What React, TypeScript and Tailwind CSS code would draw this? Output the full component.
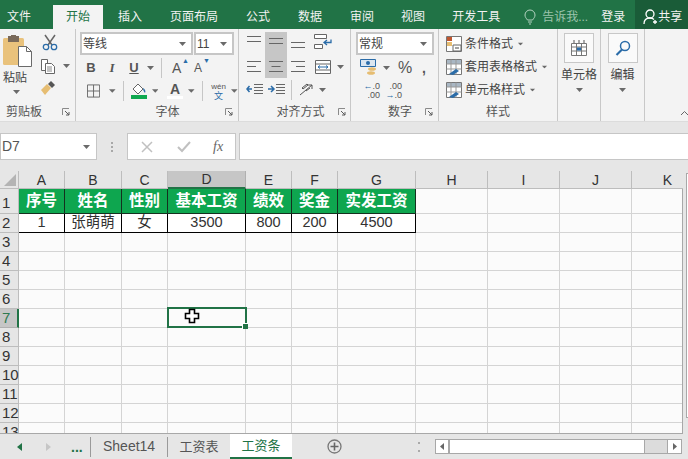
import React from 'react'

const CJK = "[font-family:'Liberation_Sans','Noto_Sans_CJK_SC',sans-serif]"

const tabs = [
  { label: '文件', cls: 'pl-[7px] pr-[22px]' },
  { label: '开始', cls: 'px-[13px]', active: true },
  { label: '插入', cls: 'px-[15px]' },
  { label: '页面布局', cls: 'px-[13px]' },
  { label: '公式', cls: 'px-[15px]' },
  { label: '数据', cls: 'px-[13px]' },
  { label: '审阅', cls: 'px-[15px]' },
  { label: '视图', cls: 'px-[12px]' },
  { label: '开发工具', cls: 'px-[15px]' },
]

const columns = ['A', 'B', 'C', 'D', 'E', 'F', 'G', 'H', 'I', 'J', 'K']
const headerRow = ['序号', '姓名', '性别', '基本工资', '绩效', '奖金', '实发工资']
const dataRow = ['1', '张萌萌', '女', '3500', '800', '200', '4500']

function Caret({ className = '' }: { className?: string }) {
  return (
    <svg width="7" height="4" viewBox="0 0 7 4" className={className}>
      <path d="M0 0h7L3.5 4z" fill="#6a6a6a" />
    </svg>
  )
}

function Launcher() {
  return (
    <svg width="8" height="8" viewBox="0 0 8 8">
      <path d="M.5 7V.5H7" fill="none" stroke="#8a8a8a" />
      <path d="M3 3l4 4M7 4v3H4" fill="none" stroke="#5a5a5a" />
    </svg>
  )
}

function GroupLabel({ text, launcher = true, pad }: { text: string; launcher?: boolean; pad: string }) {
  return (
    <div className={`mt-auto h-[17px] mb-[1px] flex items-center text-[12px] text-[#555] ${pad}`}>
      <span className="flex-1 text-center">{text}</span>
      {launcher && <Launcher />}
    </div>
  )
}

function Lines({ widths, align = 'left', color = '#666' }: { widths: number[]; align?: 'left' | 'center' | 'right'; color?: string }) {
  return (
    <svg width="16" height="13" viewBox="0 0 16 13">
      {widths.map((w, i) => {
        const x = align === 'left' ? 1 : align === 'right' ? 15 - w : 8 - w / 2
        return <path key={i} d={`M${x} ${1.5 + i * 5}h${w}`} stroke={color} />
      })}
    </svg>
  )
}

function Sep({ h = 'h-[20px]' }: { h?: string }) {
  return <div className={`w-px bg-[#c6c6c6] ${h}`} />
}

function Combo({ text, className }: { text: string; className: string }) {
  return (
    <div className={`h-[23px] border-2 border-[#c6c6c6] bg-white flex items-center pl-[1px] pr-[5px] text-[12px] text-[#444] ${className}`}>
      <span className="flex-1">{text}</span>
      <Caret />
    </div>
  )
}

function ClipboardGroup() {
  return (
    <div className="w-[76px] shrink-0 flex flex-col border-r border-[#c8c8c8]">
      <div className="flex">
        <div className="w-[36px] pl-[3px] pt-[6px] flex flex-col">
          <svg width="29" height="32" viewBox="0 0 29 32">
            <rect x="0" y="3" width="21" height="27" rx="1.5" fill="#e9c27c" />
            <rect x="5" y="1" width="11" height="6" fill="#7a6a5a" />
            <rect x="8" y="0" width="5" height="3" fill="#7a6a5a" />
            <path d="M15.500 11.500h8l5 5v15h-13z" fill="#fff" stroke="#6a6a6a" />
            <path d="M23.500 11.500v5h5" fill="none" stroke="#6a6a6a" />
          </svg>
          <span className="text-[12px] leading-[16px] mt-[3px] text-[#444]">粘贴</span>
          <Caret className="ml-[10px] mt-[4px]" />
        </div>
        <div className="flex flex-col pl-[3px] pt-[5px]">
          <svg width="16" height="17" viewBox="0 0 16 17" className="ml-[3px]">
            <path d="M3 1l7 10M13 1L6 11" stroke="#666" strokeWidth="1.500" fill="none" />
            <circle cx="4" cy="13" r="2.700" fill="none" stroke="#2b6ca8" strokeWidth="1.300" />
            <circle cx="12" cy="13" r="2.700" fill="none" stroke="#2b6ca8" strokeWidth="1.300" />
          </svg>
          <div className="flex items-center mt-[7px]">
            <svg width="16" height="16" viewBox="0 0 16 16" className="ml-[1px]">
              <path d="M1.500 1.500h6v11h-6z" fill="#fff" stroke="#666" />
              <path d="M5.500 5.500h6l3 3v7h-9z" fill="#fff" stroke="#666" />
              <path d="M7 9h5M7 11h5M7 13h5" stroke="#888" />
            </svg>
            <Caret className="ml-[7px]" />
          </div>
          <svg width="16" height="15" viewBox="0 0 16 15" className="ml-[1px] mt-[7px]">
            <path d="M1 9l6-6 4 4-6 7z" fill="#e6bd72" />
            <path d="M8 3l3-3 4 4-3 3z" fill="#555" />
          </svg>
        </div>
      </div>
      <GroupLabel text="剪贴板" pad="pl-[6px] pr-[5px] [&>span]:text-left" />
    </div>
  )
}

function FontGroup() {
  return (
    <div className="w-[163px] shrink-0 flex flex-col border-r border-[#c8c8c8] pl-[4px] pt-[3px]">
      <div className="flex gap-[1px]">
        <Combo text="等线" className="w-[113px]" />
        <Combo text="11" className="w-[40px]" />
      </div>
      <div className="flex items-center h-[22px] mt-[2px] text-[#555]">
        <span className="w-[20px] ml-[1px] text-center text-[13px] font-bold">B</span>
        <span className="w-[22px] text-center text-[13px] font-bold italic [font-family:'Liberation_Serif',serif]">I</span>
        <span className="w-[22px] text-center text-[13px] font-bold underline">U</span>
        <Caret className="ml-[2px] mr-[7px]" />
        <Sep />
        <span className="ml-[10px] w-[22px] text-[14px] font-medium relative">A<span className="absolute left-[10px] top-[-2px] text-[7px] text-[#2b6ca8]">▲</span></span>
        <span className="w-[22px] text-[12px] font-medium relative">A<span className="absolute left-[9px] top-[-3px] text-[7px] text-[#2b6ca8]">▼</span></span>
      </div>
      <div className="flex items-center h-[22px] mt-[1px]">
        <svg width="14" height="14" viewBox="0 0 14 14" className="ml-[7px]">
          <path d="M.5.500h13v13H.5zM7 .5v13M.5 7h13" fill="none" stroke="#666" />
        </svg>
        <Caret className="ml-[9px] mr-[7px]" />
        <Sep />
        <div className="ml-[7px] w-[16px] flex flex-col items-center">
          <svg width="16" height="12" viewBox="0 0 16 12">
            <path d="M2 6l5-5 5 5-5 5z" fill="#fff" stroke="#666" />
            <path d="M12 5c2 1 3 3 2 5-1-1-2-3-2-5z" fill="#2b6ca8" />
          </svg>
          <div className="h-[4px] w-[16px] bg-[#0fa84f]" />
        </div>
        <Caret className="ml-[5px] mr-[9px]" />
        <div className="w-[16px] flex flex-col items-center text-[14px] leading-[13px] font-bold text-[#555]">
          A
          <div className="h-[3px] w-[16px] bg-white" />
        </div>
        <Caret className="ml-[5px] mr-[7px]" />
        <Sep />
        <div className="ml-[8px] w-[17px] flex flex-col items-center text-[#555]">
          <span className="text-[8px] leading-[9px]">wén</span>
          <span className="text-[9px] leading-[10px] text-[#2b6ca8]">文</span>
        </div>
        <Caret className="ml-[5px]" />
      </div>
      <GroupLabel text="字体" pad="pl-[30px] pr-[5px]" />
    </div>
  )
}

function AlignGroup() {
  return (
    <div className="w-[112px] shrink-0 flex flex-col border-r border-[#c8c8c8] pt-[3px]">
      <div className="flex pl-[4px]">
        <div className="w-[22px] h-[23px] flex items-start justify-center pt-[3px]"><Lines widths={[14, 14]} align="center" /></div>
        <div className="w-[22px] h-[23px] bg-[#c6c6c6] flex items-center justify-center"><Lines widths={[14, 14]} align="center" /></div>
        <div className="w-[22px] h-[23px] flex items-end justify-center pb-[1px]"><Lines widths={[14, 14]} align="center" /></div>
        <div className="ml-[3px] w-[22px] flex justify-center pt-[2px]">
          <svg width="18" height="16" viewBox="0 0 18 16">
            <path d="M.5.500h12v4H.5zM.5 10.500h8v4H.5z" fill="#fff" stroke="#666" />
            <path d="M17 5.500v3h-6M13 6l-3 2.500 3 2.500" fill="none" stroke="#2b6ca8" strokeWidth="1.300" />
          </svg>
        </div>
      </div>
      <div className="flex items-center pl-[4px]">
        <div className="w-[22px] h-[23px] flex items-center justify-center"><Lines widths={[14, 9, 14]} /></div>
        <div className="w-[22px] h-[23px] bg-[#c6c6c6] flex items-center justify-center"><Lines widths={[14, 9, 14]} align="center" /></div>
        <div className="w-[22px] h-[23px] flex items-center justify-center"><Lines widths={[14, 9, 14]} align="right" /></div>
        <div className="ml-[3px] w-[22px] flex justify-center">
          <svg width="16" height="14" viewBox="0 0 16 14">
            <path d="M.5.500h15v13H.5zM.5 4h15M.5 10h15" fill="#fff" stroke="#666" />
            <path d="M3 7h10M3 7l2-1.500M3 7l2 1.500M13 7l-2-1.500M13 7l-2 1.500" stroke="#2b6ca8" fill="none" />
          </svg>
        </div>
        <Caret className="ml-[3px]" />
      </div>
      <div className="flex items-center pl-[4px] h-[23px]">
        <svg width="17" height="13" viewBox="0 0 17 13" className="ml-[3px]">
          <path d="M8 1.500h9M8 4.500h9M8 7.500h9M8 10.500h9" stroke="#666" />
          <path d="M1 6h5M3.500 3L1 6l2.500 3" stroke="#2b6ca8" fill="none" strokeWidth="1.500" />
        </svg>
        <svg width="17" height="13" viewBox="0 0 17 13" className="ml-[5px]">
          <path d="M8 1.500h9M8 4.500h9M8 7.500h9M8 10.500h9" stroke="#666" />
          <path d="M0 6h5M3 3l3 3-3 3" stroke="#2b6ca8" fill="none" strokeWidth="1.500" />
        </svg>
        <div className="ml-[6px]"><Sep /></div>
        <svg width="18" height="16" viewBox="0 0 18 16" className="ml-[7px]">
          <path d="M1 13L13 3M13 3h-4M13 3v4" stroke="#555" fill="none" />
          <path d="M3 6l5-4 1 1-5 4zM7 9l4-3" stroke="#555" fill="none" />
        </svg>
        <Caret className="ml-[2px]" />
      </div>
      <GroupLabel text="对齐方式" pad="pl-[24px] pr-[4px]" />
    </div>
  )
}

function NumberGroup() {
  return (
    <div className="w-[88px] shrink-0 flex flex-col border-r border-[#c8c8c8] pl-[5px] pt-[3px]">
      <Combo text="常规" className="w-[78px]" />
      <div className="flex items-center h-[23px] mt-[1px]">
        <svg width="18" height="17" viewBox="0 0 18 17" className="ml-[4px]">
          <path d="M.5.500h15v7H.5z" fill="#dbe6f0" stroke="#2b6ca8" />
          <circle cx="8" cy="4" r="2" fill="#2b6ca8" />
          <ellipse cx="12" cy="10" rx="4" ry="1.800" fill="#e6bd72" />
          <ellipse cx="11" cy="14" rx="4" ry="1.800" fill="#e6bd72" />
        </svg>
        <Caret className="ml-[5px]" />
        <span className="ml-[8px] w-[20px] text-[16px] text-[#555] font-medium">%</span>
        <span className="ml-[4px] text-[14px] font-bold text-[#555] leading-[10px]">,</span>
      </div>
      <div className="flex items-center h-[23px] text-[9px] leading-[9px] text-[#555] font-medium">
        <div className="ml-[3px] w-[21px] text-right">
          <div><span className="text-[#2b6ca8]">←</span>.0</div>
          <div>.00</div>
        </div>
        <div className="ml-[2px] w-[20px] text-right">
          <div>.00</div>
          <div><span className="text-[#2b6ca8]">→</span>.0</div>
        </div>
      </div>
      <GroupLabel text="数字" pad="pl-[19px] pr-[5px]" />
    </div>
  )
}

function StyleRow({ label, kind }: { label: string; kind: 'cond' | 'table' }) {
  return (
    <div className="flex items-center h-[23px]">
      <svg width="16" height="16" viewBox="0 0 16 16">
        <path d="M.5.500h15v15H.5z" fill="#fff" stroke="#777" />
        {kind === 'cond' ? (
          <>
            <path d="M1 1h5v4H1z" fill="#c0562f" />
            <path d="M1 6h5v4H1z" fill="#e6bd72" />
            <path d="M7 9h8v6H7z" fill="#fff" stroke="#666" />
            <path d="M9 12h4" stroke="#444" />
          </>
        ) : (
          <>
            <path d="M1 1h14v4H1z" fill="#a9b7c4" />
            <path d="M5 .5v15M10 .5v15M.5 5h15M.5 10h15" stroke="#999" />
            <path d="M3 15l7-5 3 2-6 4z" fill="#2b6ca8" />
          </>
        )}
      </svg>
      <span className="ml-[3px] text-[12px] text-[#444]">{label}</span>
      <Caret className="ml-[4px] scale-[.8]" />
    </div>
  )
}

function StylesGroup() {
  return (
    <div className="w-[119px] shrink-0 flex flex-col border-r border-[#c8c8c8] pl-[7px] pt-[3px]">
      <StyleRow label="条件格式" kind="cond" />
      <StyleRow label="套用表格格式" kind="table" />
      <StyleRow label="单元格样式" kind="table" />
      <GroupLabel text="样式" launcher={false} pad="pr-[7px]" />
    </div>
  )
}

function BigButton({ label, children, className }: { label: string; children: React.ReactNode; className: string }) {
  return (
    <div className={`shrink-0 flex flex-col items-center pt-[4px] border-r border-[#c8c8c8] ${className}`}>
      <div className="w-[30px] h-[30px] border border-[#c8c8c8] bg-[#fafafa] flex items-center justify-center">{children}</div>
      <span className="text-[12px] leading-[16px] mt-[4px] text-[#444]">{label}</span>
      <Caret className="mt-[5px]" />
    </div>
  )
}

function Ribbon() {
  return (
    <div className="h-[93px] bg-[#f3f3f3] flex border-b border-[#dcdcdc]">
      <ClipboardGroup />
      <FontGroup />
      <AlignGroup />
      <NumberGroup />
      <StylesGroup />
      <BigButton label="单元格" className="w-[43px]">
        <svg width="16" height="16" viewBox="0 0 16 16">
          <path d="M.5 3.500h15v12H.5zM.5 7h15M.5 11h15M5.500 3.500v12M10.500 3.500v12" fill="#fff" stroke="#777" />
          <path d="M6 7.500h4v3H6z" fill="#2b6ca8" />
          <path d="M3 0v3M8 0v3M13 0v3" stroke="#555" />
        </svg>
      </BigButton>
      <BigButton label="编辑" className="w-[44px]">
        <svg width="16" height="16" viewBox="0 0 16 16">
          <circle cx="10" cy="6" r="4.500" fill="none" stroke="#2b6ca8" strokeWidth="1.500" />
          <path d="M7 9.500L1.500 15" stroke="#2b6ca8" strokeWidth="2.200" />
        </svg>
      </BigButton>
      <div className="flex-1 flex items-end justify-end pb-[5px]">
        <svg width="7" height="5" viewBox="0 0 7 5"><path d="M0 4l3.500-3.500L7 4" stroke="#666" fill="none" /></svg>
      </div>
    </div>
  )
}

function FormulaBar() {
  return (
    <div className="h-[49px] bg-[#e6e6e6] flex pt-[11px]">
      <div className="w-[97px] h-[27px] bg-white border border-[#c6c6c6] flex items-center pl-[1px] pr-[6px] text-[14px] text-[#555]">
        <span className="flex-1">D7</span>
        <Caret />
      </div>
      <div className="w-[30px] h-[27px] flex items-center justify-center">
        <span className="w-[2px] h-[10px] border-y-[2px] border-[#a8a8a8] relative"><span className="absolute top-[2px] left-0 w-[2px] h-[2px] bg-[#a8a8a8]" /></span>
      </div>
      <div className="w-[109px] h-[27px] bg-white border border-[#c6c6c6] flex items-center">
        <svg width="12" height="12" viewBox="0 0 12 12" className="ml-[13px]"><path d="M1 1l10 10M11 1L1 11" stroke="#c0c0c0" strokeWidth="1.500" /></svg>
        <svg width="14" height="12" viewBox="0 0 14 12" className="ml-[24px]"><path d="M1 6l4 4 8-9" stroke="#c0c0c0" strokeWidth="2" fill="none" /></svg>
        <span className="ml-[22px] text-[14px] italic text-[#666] [font-family:'Liberation_Serif',serif]">fx</span>
      </div>
      <div className="ml-[3px] flex-1 h-[27px] bg-white border border-[#c6c6c6] border-r-0" />
    </div>
  )
}

function SheetGrid() {
  const rows = [3, 4, 5, 6, 7, 8, 9, 10, 11, 12, 13]
  return (
    <div className="flex bg-[#e6e6e6] h-[263px]">
      <div className="relative w-[683px] h-[263px] overflow-hidden border-b border-[#a8a8a8] shrink-0">
        <div className="grid grid-cols-[19px_46px_57px_46px_78px_46px_46px_78px_72px_72px_72px_72px] grid-rows-[18px_25px_19px_repeat(11,19px)] bg-[#fbfbfb] text-[14px] text-[#333] w-[703px]">
          <div className="bg-[#e6e6e6] border-r border-b border-[#bdbdbd] flex items-end justify-end pr-[2px] pb-[2px]">
            <svg width="12" height="12" viewBox="0 0 12 12"><path d="M12 0v12H0z" fill="#b4b4b4" /></svg>
          </div>
          {columns.map(c => (
            <div
              key={c}
              className={`flex items-end justify-center leading-[15px] border-r ${
                c === 'D'
                  ? 'bg-[#c6c6c6] border-b-2 border-b-[#217346] border-r-[#b0b0b0]'
                  : 'bg-[#e6e6e6] border-b border-[#bdbdbd]'
              }`}
            >
              {c}
            </div>
          ))}

          <div className="bg-[#e6e6e6] border-r border-b border-[#bdbdbd] flex items-end pl-[2px] text-[15px] leading-[20px]">1</div>
          {headerRow.map(h => (
            <div key={h} className="bg-[#0ea64f] border-r border-b border-[#14301f] flex items-center justify-center text-white font-bold text-[15.500px]">{h}</div>
          ))}
          {columns.slice(7).map(c => (
            <div key={c} className="border-r border-b border-[#d4d4d4]" />
          ))}

          <div className="bg-[#e6e6e6] border-r border-b border-[#bdbdbd] flex items-center pl-[2px] text-[15px]">2</div>
          {dataRow.map((d, i) => (
            <div key={i} className="bg-white border-r border-b border-black flex items-center justify-center text-[14.500px] text-[#333]">{d}</div>
          ))}
          {columns.slice(7).map(c => (
            <div key={c} className="border-r border-b border-[#d4d4d4]" />
          ))}

          {rows.map(r => (
            <React.Fragment key={r}>
              <div
                className={`flex items-center pl-[2px] text-[15px] border-b ${
                  r === 7
                    ? 'bg-[#c6c6c6] border-r-2 border-r-[#217346] border-b-[#b0b0b0] text-[#2f7a50]'
                    : 'bg-[#e6e6e6] border-r border-[#bdbdbd]'
                }`}
              >
                {r}
              </div>
              {columns.map(c => (
                <div key={c} className="border-r border-b border-[#d4d4d4]" />
              ))}
            </React.Fragment>
          ))}
        </div>
        {/* right edge of the sheet, only below the column headers */}
        <div className="absolute right-0 top-[18px] bottom-0 w-px bg-[#a8a8a8]" />
        {/* active cell D7 */}
        <div className="absolute left-[167px] top-[136px] w-[80px] h-[21px] border-2 border-[#217346]">
          <div className="absolute right-[-3px] bottom-[-3px] w-[5px] h-[5px] bg-[#217346] border-l border-t border-white box-content" />
          <svg width="16" height="16" viewBox="0 0 16 16" className="absolute left-[15px] top-[-1px]">
            <path d="M5.500 1.500h5v4h4v5h-4v4h-5v-4h-4v-5h4z" fill="#fff" stroke="#000" strokeWidth="1.600" />
          </svg>
        </div>
      </div>
      <div className="flex-1 flex justify-end pt-[2px]">
        <div className="w-[2px] h-[245px] border-l border-y border-[#a8a8a8] bg-white" />
      </div>
    </div>
  )
}

function SheetTabs() {
  return (
    <div className="h-[25px] bg-[#e6e6e6] flex items-center text-[13px] text-[#555]">
      <svg width="5" height="8" viewBox="0 0 5 8" className="ml-[17px]"><path d="M5 0v8L0 4z" fill="#217346" /></svg>
      <svg width="5" height="8" viewBox="0 0 5 8" className="ml-[24px]"><path d="M0 0v8l5-4z" fill="#c6c6c6" /></svg>
      <span className="ml-[20px] w-[19px] text-[14px] font-bold text-[#217346] leading-[12px]">...</span>
      <div className="w-px h-[20px] bg-[#9a9a9a]" />
      <span className="ml-[12px] w-[52px] text-center text-[14px] whitespace-nowrap">Sheet14</span>
      <div className="ml-[12px] w-px h-[20px] bg-[#9a9a9a]" />
      <span className="ml-[11px] w-[40px] text-center whitespace-nowrap">工资表</span>
      <div className="ml-[11px] w-[62px] h-[25px] bg-white border-b-2 border-[#217346] flex items-center justify-center text-[#217346] whitespace-nowrap">工资条</div>
      <svg width="15" height="15" viewBox="0 0 15 15" className="ml-[35px]">
        <circle cx="7.500" cy="7.500" r="6.500" fill="none" stroke="#777" strokeWidth="1.300" />
        <path d="M7.500 3.500v8M3.500 7.500h8" stroke="#666" strokeWidth="1.600" />
      </svg>
      <div className="ml-[76px] w-[2px] h-[10px] border-y-2 border-[#aaa]" />
      <div className="ml-[15px] flex h-[15px] w-[247px] border border-[#a8a8a8]">
        <div className="w-[14px] bg-white border-r-2 border-[#a8a8a8] flex items-center justify-center">
          <svg width="4" height="7" viewBox="0 0 4 7"><path d="M4 0v7L0 3.500z" fill="#666" /></svg>
        </div>
        <div className="w-[195px] bg-white border-r border-[#a8a8a8]" />
        <div className="flex-1 bg-[#dcdcdc]" />
        <div className="w-[14px] bg-white border-l border-[#a8a8a8] flex items-center justify-center">
          <svg width="4" height="7" viewBox="0 0 4 7"><path d="M0 0v7l4-3.500z" fill="#666" /></svg>
        </div>
      </div>
    </div>
  )
}

export default function App() {
  return (
    <div className={`w-[688px] h-[459px] overflow-hidden bg-[#e6e6e6] ${CJK}`}>
      {/* Tab bar */}
      <div className="h-[29px] bg-[#217346] flex items-end text-[12px] text-[#f2f2f2]">
        {tabs.map(t => (
          <div
            key={t.label}
            className={`h-[24px] flex items-center whitespace-nowrap ${t.cls} ${t.active ? 'bg-[#f3f3f3] text-[#217346]' : ''}`}
          >
            {t.label}
          </div>
        ))}
        <div className="h-[24px] flex items-center ml-[9px] text-[#9cc4ac]">
          <svg width="12" height="16" viewBox="0 0 12 16" className="mr-[6px]">
            <path d="M3.500 11C2 9 1 8 1 6a5 5 0 0 1 10 0c0 2-1 3-2.500 5zM4 13h4M5 15h2" fill="none" stroke="#b5d3c1" />
          </svg>
          告诉我...
        </div>
        <div className="h-[24px] flex items-center ml-[13px]">登录</div>
        <div className="h-[29px] ml-[10px] flex-1 bg-[#1a5c38] flex items-center pl-[8px] pt-[4px] whitespace-nowrap">
          <svg width="14" height="16" viewBox="0 0 14 16" className="mr-[-1px] shrink-0">
            <circle cx="7" cy="5" r="4" fill="none" stroke="#fff" strokeWidth="1.300" />
            <path d="M1 15c0-4 2-6 6-6 2 0 3 .5 4 1.500M10 13h4M12 11v4" fill="none" stroke="#fff" strokeWidth="1.300" />
          </svg>
          <span className="ml-[2px]">共享</span>
        </div>
      </div>
      <Ribbon />
      <FormulaBar />
      <SheetGrid />
      <SheetTabs />
    </div>
  )
}
